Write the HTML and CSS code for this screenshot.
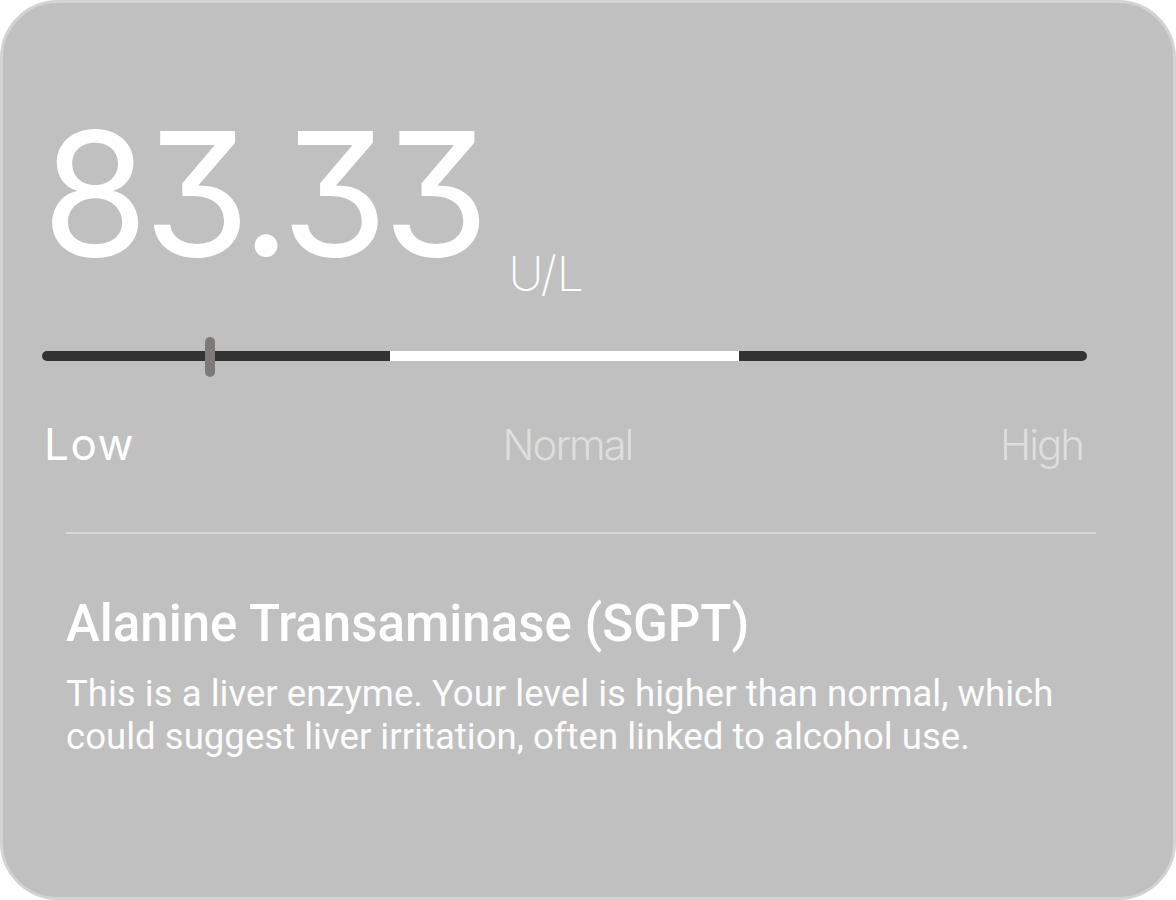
FILE: index.html
```html
<!DOCTYPE html>
<html lang="en">
<head>
<meta charset="utf-8">
<title>Alanine Transaminase</title>
<link rel="stylesheet" href="styles.css">
</head>
<body>
<div class="card">
  <div class="reading">
    <span class="value">83.33</span>
    <span class="unit">U/L</span>
  </div>
  <div class="scale">
    <div class="track">
      <span class="seg seg-low"></span>
      <span class="seg seg-normal"></span>
      <span class="seg seg-high"></span>
      <span class="thumb"></span>
    </div>
    <div class="labels">
      <span class="label active">Low</span>
      <span class="label">Normal</span>
      <span class="label">High</span>
    </div>
  </div>
  <div class="info">
    <h2 class="title">Alanine Transaminase (SGPT)</h2>
    <p class="desc">This is a liver enzyme. Your level is higher than normal, which could suggest liver irritation, often linked to alcohol use.</p>
  </div>
</div>
</body>
</html>
```
FILE: styles.css
```css
html, body {
  margin: 0;
  padding: 0;
  background: #ffffff;
}
.card {
  box-sizing: border-box;
  width: 1176px;
  height: 900px;
  background: #c0c0c0;
  border: 3px solid #d3d3d3;
  border-radius: 58px;
  padding: 0 86px 0 39px;
  overflow: hidden;
}
.reading {
  display: flex;
  align-items: flex-end;
  gap: 24px;
  padding-top: 104px;
}
.value {
  font-family: Inter, "Noto Sans", sans-serif;
  font-feature-settings: "cv09";
  font-weight: 400;
  font-size: 172px;
  line-height: 1;
  letter-spacing: -5px;
  color: #ffffff;
}
.unit {
  font-family: Inter, "Noto Sans", sans-serif;
  font-weight: 200;
  font-size: 48px;
  line-height: 1;
  color: #ffffff;
  margin-bottom: -19px;
}
.scale {
  margin-top: 72px;
}
.track {
  position: relative;
  display: flex;
  height: 10px;
}
.seg {
  flex: 1;
  background: #333333;
}
.seg-low {
  border-radius: 5px 0 0 5px;
}
.seg-normal {
  background: #ffffff;
}
.seg-high {
  border-radius: 0 5px 5px 0;
}
.thumb {
  position: absolute;
  left: 163px;
  top: -14px;
  width: 10px;
  height: 40px;
  border-radius: 5px;
  background: #7f7a7a;
}
.labels {
  display: flex;
  justify-content: space-between;
  align-items: flex-end;
  margin-top: 61px;
  padding: 0 4px 0 2px;
}
.label {
  font-family: Inter, "Noto Sans", sans-serif;
  font-weight: 300;
  font-size: 42px;
  line-height: 1;
  letter-spacing: -2px;
  color: #dedede;
}
.label.active {
  font-weight: 400;
  font-size: 44px;
  letter-spacing: 1.5px;
  color: #ffffff;
}
.info {
  margin: 66px -9px 0 24px;
  border-top: 2px solid #d8d8d8;
  padding-top: 60px;
}
.title {
  margin: 0;
  font-family: Roboto, "Noto Sans", sans-serif;
  font-weight: 500;
  font-size: 51px;
  line-height: 60px;
  color: #ffffff;
}
.desc {
  margin: 18px 0 0;
  font-family: Roboto, "Noto Sans", sans-serif;
  font-weight: 400;
  font-size: 36.6px;
  line-height: 43px;
  color: #fcfcfc;
}
```
